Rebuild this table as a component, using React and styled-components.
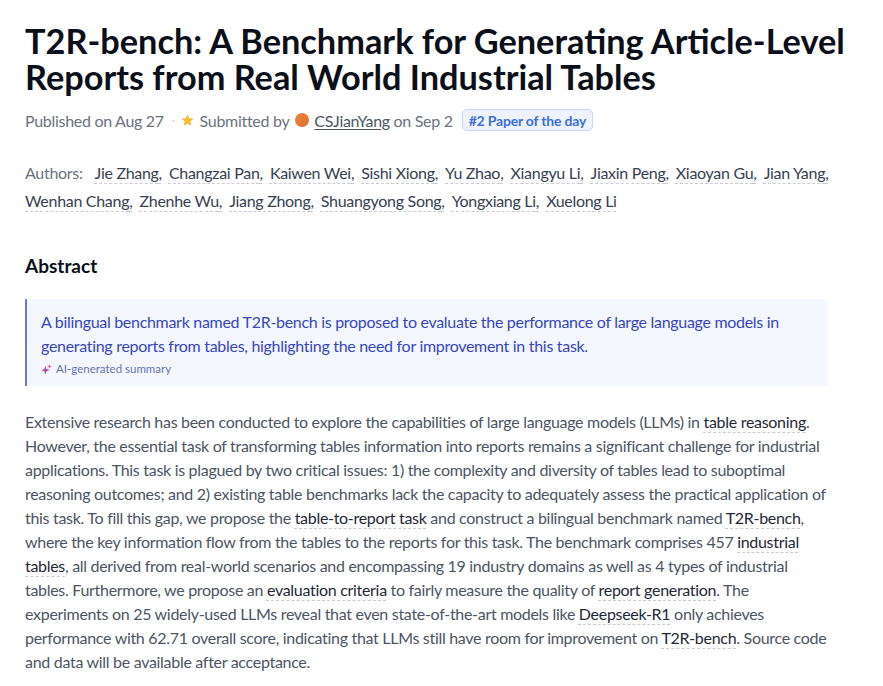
import React from "react";
import styled, { createGlobalStyle } from "styled-components";

const GlobalStyle = createGlobalStyle`
  html, body {
    margin: 0;
    padding: 0;
    background: #ffffff;
  }
  body {
    font-family: "Lato", "Noto Sans", sans-serif;
    -webkit-font-smoothing: antialiased;
  }
`;

const Page = styled.main`
  padding: 23px 25px 0 25px;
  width: 883px;
  box-sizing: border-box;
`;

const Title = styled.h1`
  margin: 0;
  font-size: 34.3px;
  line-height: 36px;
  font-weight: 700;
  color: #0b0f19;
  letter-spacing: 0;
  white-space: nowrap;
`;

const MetaRow = styled.div`
  display: flex;
  align-items: center;
  height: 24px;
  margin-top: 13px;
  font-size: 16px;
  color: #6b7280;
  white-space: nowrap;
  letter-spacing: -0.3px;
`;

const Dot = styled.span`
  margin: 0 6px 0 8px;
  color: #c4c8cf;
  font-size: 12px;
`;

const Avatar = styled.span`
  display: inline-block;
  width: 14px;
  height: 14px;
  border-radius: 50%;
  background: linear-gradient(135deg, #f08a3c, #d96a32);
  margin: 0 5px 0 6px;
`;

const UserLink = styled.a`
  color: #4b5563;
  text-decoration: underline;
  text-underline-offset: 2px;
`;

const Badge = styled.span`
  margin-left: 9px;
  padding: 0 6px;
  height: 20px;
  display: inline-flex;
  align-items: center;
  border: 1px solid #c7d6fb;
  background: #eef3ff;
  border-radius: 5px;
  color: #3b6fe0;
  font-weight: 700;
  font-size: 14px;
  letter-spacing: -0.2px;
`;

const Authors = styled.div`
  margin-top: 27px;
  font-size: 16px;
  line-height: 28px;
  color: #374151;
  letter-spacing: -0.3px;
  white-space: nowrap;
`;

const AuthorsLabel = styled.span`
  color: #6b7280;
  margin-right: 12px;
`;

const AuthorName = styled.span`
  display: inline-block;
  text-decoration: underline dashed #c9ccd2;
  text-underline-offset: 4px;
  text-decoration-thickness: 1px;
  margin-right: 7px;
`;

const SectionTitle = styled.h2`
  margin: 38px 0 0 0;
  font-size: 19px;
  line-height: 26px;
  font-weight: 700;
  color: #0b0f19;
`;

const Summary = styled.blockquote`
  margin: 20px 0 0 0;
  width: 803px;
  box-sizing: border-box;
  padding: 11px 14px 9px 14px;
  background: #f5f7ff;
  border-left: 2px solid #6a7bd4;
  border-radius: 0 4px 4px 0;
`;

const SummaryText = styled.p`
  margin: 0;
  font-size: 16px;
  line-height: 24px;
  color: #3647bf;
  white-space: nowrap;
  letter-spacing: -0.3px;
`;

const SummaryNote = styled.div`
  display: flex;
  align-items: center;
  gap: 4px;
  margin-top: 3px;
  font-size: 11.5px;
  line-height: 16px;
  color: #6672b8;
`;

const Body = styled.p`
  margin: 24px 0 0 0;
  font-size: 16px;
  line-height: 24px;
  color: #4b5563;
  white-space: nowrap;
  letter-spacing: -0.3px;
`;

const Term = styled.span`
  color: #1f2937;
  text-decoration: underline dashed #c9ccd2;
  text-underline-offset: 4px;
  text-decoration-thickness: 1px;
`;

const Star = () => (
  <svg width="13" height="13" viewBox="0 0 24 24" style={{ marginRight: 6 }}>
    <path
      d="M12 2.2l2.9 6.3 6.9.7-5.2 4.6 1.5 6.8L12 17.1l-6.1 3.5 1.5-6.8L2.2 9.2l6.9-.7z"
      fill="#f5c02b"
      stroke="#e8a91a"
      strokeWidth="1"
      strokeLinejoin="round"
    />
  </svg>
);

const Sparkle = () => (
  <svg width="11" height="11" viewBox="0 0 20 20">
    <defs>
      <linearGradient id="sp" x1="0" y1="0" x2="1" y2="1">
        <stop offset="0" stopColor="#e0609c" />
        <stop offset="1" stopColor="#6d42d8" />
      </linearGradient>
    </defs>
    <path d="M8 3 L10 9 L16 11 L10 13 L8 19 L6 13 L0 11 L6 9 Z" fill="url(#sp)" />
    <path d="M15.5 0 L16.6 3.4 L20 4.5 L16.6 5.6 L15.5 9 L14.4 5.6 L11 4.5 L14.4 3.4 Z" fill="#e0609c" />
  </svg>
);

const authors = [
  ["Jie Zhang", "Changzai Pan", "Kaiwen Wei", "Sishi Xiong", "Yu Zhao", "Xiangyu Li", "Jiaxin Peng", "Xiaoyan Gu", "Jian Yang"],
  ["Wenhan Chang", "Zhenhe Wu", "Jiang Zhong", "Shuangyong Song", "Yongxiang Li", "Xuelong Li"],
];

const App = () => {
  const flat = authors.flat();
  return (
    <>
      <GlobalStyle />
      <Page>
        <Title>
          T2R-bench: A Benchmark for Generating Article-Level
          <br />
          Reports from Real World Industrial Tables
        </Title>

        <MetaRow>
          <span>Published on Aug 27</span>
          <Dot>·</Dot>
          <Star />
          <span>Submitted by</span>
          <Avatar />
          <UserLink>CSJianYang</UserLink>
          <span>&nbsp;on Sep 2</span>
          <Badge>#2 Paper of the day</Badge>
        </MetaRow>

        <Authors>
          <AuthorsLabel>Authors:</AuthorsLabel>
          {flat.map((name, i) => (
            <React.Fragment key={name}>
              <AuthorName>
                {name}
                {i < flat.length - 1 ? "," : ""}
              </AuthorName>
              {i === authors[0].length - 1 && <br />}
            </React.Fragment>
          ))}
        </Authors>

        <SectionTitle>Abstract</SectionTitle>

        <Summary>
          <SummaryText>
            A bilingual benchmark named T2R-bench is proposed to evaluate the performance of large language models in
            <br />
            generating reports from tables, highlighting the need for improvement in this task.
          </SummaryText>
          <SummaryNote>
            <Sparkle />
            AI-generated summary
          </SummaryNote>
        </Summary>

        <Body>
          Extensive research has been conducted to explore the capabilities of large language models (LLMs) in <Term>table reasoning</Term>.
          <br />
          However, the essential task of transforming tables information into reports remains a significant challenge for industrial
          <br />
          applications. This task is plagued by two critical issues: 1) the complexity and diversity of tables lead to suboptimal
          <br />
          reasoning outcomes; and 2) existing table benchmarks lack the capacity to adequately assess the practical application of
          <br />
          this task. To fill this gap, we propose the <Term>table-to-report task</Term> and construct a bilingual benchmark named <Term>T2R-bench</Term>,
          <br />
          where the key information flow from the tables to the reports for this task. The benchmark comprises 457 <Term>industrial</Term>
          <br />
          <Term>tables</Term>, all derived from real-world scenarios and encompassing 19 industry domains as well as 4 types of industrial
          <br />
          tables. Furthermore, we propose an <Term>evaluation criteria</Term> to fairly measure the quality of <Term>report generation</Term>. The
          <br />
          experiments on 25 widely-used LLMs reveal that even state-of-the-art models like <Term>Deepseek-R1</Term> only achieves
          <br />
          performance with 62.71 overall score, indicating that LLMs still have room for improvement on <Term>T2R-bench</Term>. Source code
          <br />
          and data will be available after acceptance.
        </Body>
      </Page>
    </>
  );
};

export default App;
